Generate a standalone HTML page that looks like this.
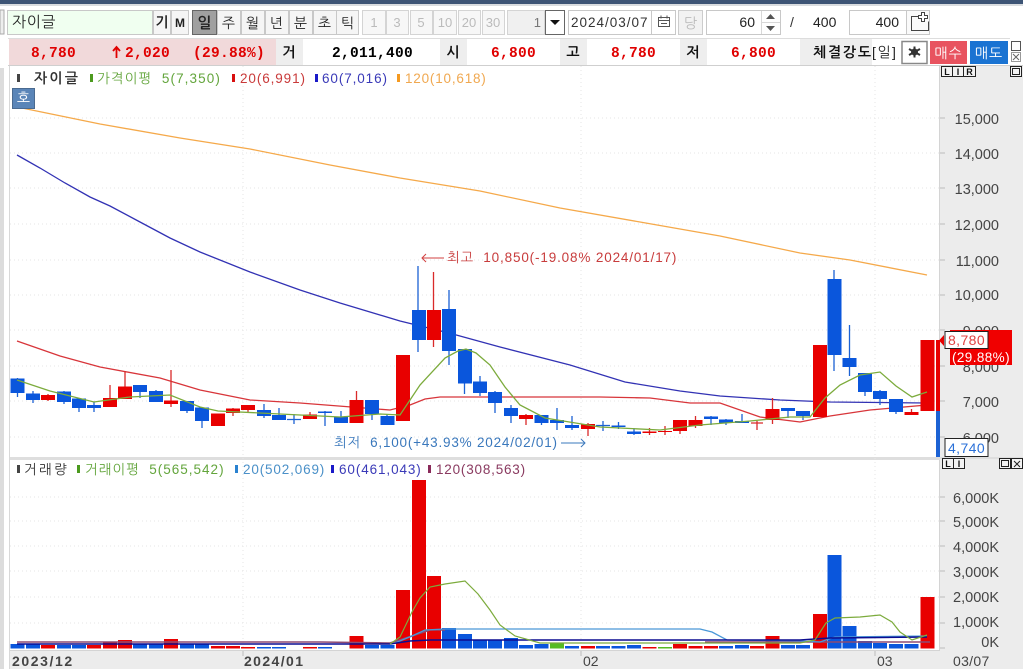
<!DOCTYPE html>
<html lang="ko"><head><meta charset="utf-8"><title>자이글</title>
<style>
html,body{margin:0;padding:0;background:#fff;width:1023px;height:669px;overflow:hidden}
svg{display:block;position:absolute;left:0;top:0;filter:blur(.35px)}
text{font-family:"Liberation Sans","NanumGothic","Noto Sans CJK KR",sans-serif;font-size:14px}
.b{font-weight:bold}
.ax{font-size:14.5px;fill:#444;text-anchor:end}
.tb{font-size:14px;fill:#222;text-anchor:middle}
.dis{font-size:13px;fill:#bbb;text-anchor:middle}
.r2{font-family:"Liberation Mono","NanumGothic",monospace;font-weight:bold;font-size:14.5px;letter-spacing:.3px}
.hd{font-weight:bold;font-size:14px;fill:#111;text-anchor:middle}
</style></head><body>
<svg width="1023" height="669" viewBox="0 0 1023 669" xmlns="http://www.w3.org/2000/svg">
<rect width="1023" height="669" fill="#fff"/>
<!-- top strip -->
<rect width="1023" height="4" fill="#3d5475"/><rect y="4" width="1023" height="2" fill="#d9dcdf"/>
<rect x="0" y="10" width="4" height="24" fill="#eee" stroke="#aaa"/>
<!-- toolbar -->
<rect x="7.500" y="10.500" width="145" height="24" fill="#f0fff0" stroke="#c8c8c8"/>
<text x="12" y="27" style="font-size:15px;letter-spacing:.6px" fill="#222">자이글</text>
<g fill="#f5f5f5" stroke="#c8c8c8">
<rect x="153.500" y="10.500" width="17" height="24"/><rect x="171.500" y="10.500" width="17" height="24"/>
<rect x="217.500" y="10.500" width="23" height="24"/><rect x="241.500" y="10.500" width="23" height="24"/><rect x="265.500" y="10.500" width="23" height="24"/><rect x="289.500" y="10.500" width="23" height="24"/><rect x="313.500" y="10.500" width="23" height="24"/><rect x="336.500" y="10.500" width="22" height="24"/>
</g>
<rect x="192.500" y="10.500" width="24" height="24" fill="#a0a0a0" stroke="#666"/>
<text class="tb b" x="162" y="27">기</text><text class="tb b" x="180" y="27" style="font-size:12px">M</text>
<text class="tb b" x="204.500" y="28" style="font-size:15px">일</text>
<text class="tb" x="228.500" y="28">주</text><text class="tb" x="252.500" y="28">월</text><text class="tb" x="276.500" y="28">년</text><text class="tb" x="300.500" y="28">분</text><text class="tb" x="324.500" y="28">초</text><text class="tb" x="347.500" y="28">틱</text>
<g fill="#f7f7f7" stroke="#d4d4d4">
<rect x="362.500" y="10.500" width="23" height="24"/><rect x="386.500" y="10.500" width="22" height="24"/><rect x="410.500" y="10.500" width="22" height="24"/><rect x="433.500" y="10.500" width="23" height="24"/><rect x="458.500" y="10.500" width="22" height="24"/><rect x="482.500" y="10.500" width="22" height="24"/>
</g>
<text class="dis" x="374" y="27">1</text><text class="dis" x="397" y="27">3</text><text class="dis" x="421" y="27">5</text><text class="dis" x="445" y="27">10</text><text class="dis" x="469" y="27">20</text><text class="dis" x="493" y="27">30</text>
<rect x="507.500" y="10.500" width="37" height="24" fill="#f0f0f0" stroke="#d4d4d4"/>
<text x="541" y="27" text-anchor="end" fill="#777" style="font-size:13px">1</text>
<rect x="545.500" y="10.500" width="19" height="24" fill="#fff" stroke="#666"/>
<path d="M550 20h10l-5 5z" fill="#111"/>
<rect x="568.500" y="10.500" width="107" height="24" fill="#fff" stroke="#c8c8c8"/><path d="M651.500 11v23" stroke="#c8c8c8"/>
<text x="571" y="27" fill="#333" style="font-size:13.500px;letter-spacing:1px">2024/03/07</text>
<path d="M658.500 17.500h11v9h-11zM658.500 20.500h11M661 15.500v3M667 15.500v3M661 23.500h6" fill="none" stroke="#555"/>
<rect x="678.500" y="10.500" width="24" height="24" fill="#f2f2f2" stroke="#ccc"/>
<text x="690.500" y="28" text-anchor="middle" fill="#bbb">당</text>
<rect x="706.500" y="10.500" width="74" height="24" fill="#fff" stroke="#c8c8c8"/><path d="M761.500 11v23M762 22.500h18" stroke="#d8d8d8"/>
<text x="755" y="27" text-anchor="end" fill="#222">60</text>
<path d="M766 19h9l-4.500-5zM766 26h9l-4.500 5z" fill="#555"/>
<text x="790" y="27" fill="#333">/</text><text x="813" y="27" fill="#222">400</text>
<rect x="849.500" y="10.500" width="57" height="24" fill="#fff" stroke="#c8c8c8"/>
<rect x="906.500" y="10.500" width="23" height="24" fill="#fafafa" stroke="#c8c8c8"/>
<text x="899" y="27" text-anchor="end" fill="#222">400</text>
<path d="M921 16.500h-9.500v14h17v-9" fill="none" stroke="#444"/><path d="M921.500 12.500h3v3h3v3h-3v3h-3v-3h-3v-3h3z" fill="#fff" stroke="#444"/>
<!-- row 2 -->
<rect x="8" y="38" width="1002" height="1" fill="#ddd"/>
<rect x="9" y="39" width="267" height="26" fill="#f1d9da"/>
<rect x="276" y="39" width="27" height="26" fill="#eeeeee"/><rect x="440" y="39" width="27" height="26" fill="#eeeeee"/><rect x="560" y="39" width="27" height="26" fill="#eeeeee"/><rect x="680" y="39" width="27" height="26" fill="#eeeeee"/><rect x="800" y="39" width="72" height="26" fill="#eeeeee"/>
<rect x="8" y="65" width="1015" height="1" fill="#cfcfcf"/>
<text class="r2" x="31" y="57" fill="#e00000">8,780</text>
<path d="M116.500 58v-10M113 51l3.500-4 3.500 4" fill="none" stroke="#e00000" stroke-width="1.800"/>
<text class="r2" x="125" y="57" fill="#e00000">2,020</text>
<text class="r2" x="193" y="57" fill="#e00000">(29.88%)</text>
<text class="hd" x="289" y="57">거</text>
<text class="r2" x="332" y="57" fill="#000">2,011,400</text>
<text class="hd" x="453" y="57">시</text>
<text class="r2" x="491" y="57" fill="#e00000">6,800</text>
<text class="hd" x="573" y="57">고</text>
<text class="r2" x="611" y="57" fill="#e00000">8,780</text>
<text class="hd" x="693" y="57">저</text>
<text class="r2" x="731" y="57" fill="#e00000">6,800</text>
<text x="813" y="57" class="b" fill="#111" style="font-size:14px;letter-spacing:1.800px">체결강도</text>
<rect x="872" y="39" width="29" height="26" fill="#fff"/>
<text x="872" y="57" fill="#222" style="font-size:14px;letter-spacing:1.500px">[일]</text>
<rect x="902" y="41.500" width="25" height="22" fill="#fff" stroke="#888" stroke-width="1.500"/>
<path d="M914.500 46.500v11M909 49l11 6M920 49l-11 6" stroke="#333" stroke-width="2" fill="none"/><circle cx="914.500" cy="52" r="3.500" fill="#333"/>
<rect x="930" y="41" width="37" height="23" fill="#e8535f"/><text x="948.500" y="58" text-anchor="middle" fill="#fff" style="letter-spacing:1px">매수</text>
<rect x="970" y="41" width="38" height="23" fill="#1a73d2"/><text x="989" y="58" text-anchor="middle" fill="#fff" style="letter-spacing:1px">매도</text>
<rect x="1011.500" y="41.500" width="9" height="9" fill="#fff" stroke="#555"/><rect x="1011.500" y="52.500" width="9" height="9" fill="#fff" stroke="#999"/><path d="M1013 54l6 6M1019 54l-6 6" stroke="#666"/>
<!-- left edge -->
<rect x="0" y="68" width="4" height="601" fill="#dcdcdc"/><rect x="9" y="66" width="1" height="603" fill="#d8d8d8"/>
<!-- axes background -->
<rect x="940" y="66" width="83" height="603" fill="#ececec"/><rect x="939" y="66" width="1" height="603" fill="#d4d4d4"/>
<rect x="10" y="651" width="930" height="18" fill="#ececec"/><rect x="10" y="650" width="930" height="1" fill="#d4d4d4"/>
<rect x="10" y="457" width="930" height="3" fill="#dedede"/>
<rect x="940" y="457" width="83" height="2" fill="#dedede"/>
<!-- grid -->
<g stroke="#e6e6e6" stroke-dasharray="1 3" fill="none">
<path d="M10 118H940M10 153H940M10 188H940M10 224H940M10 260H940M10 295H940M10 330H940M10 366H940M10 401H940M10 437H940"/>
<path d="M10 497H940M10 521H940M10 546H940M10 571H940M10 597H940M10 623H940"/>
<path d="M243 66V650M581 66V650M875 66V650"/>
</g>
<g stroke="#bbb" fill="none">
<path d="M940 118h5M940 153h5M940 188h5M940 224h5M940 260h5M940 295h5M940 330h5M940 366h5M940 401h5M940 437h5M940 497h5M940 521h5M940 546h5M940 571h5M940 597h5M940 623h5M940 648h5M243 651v5M581 651v5M875 651v5"/>
</g>
<!-- MA lines behind candles -->
<polyline fill="none" stroke="#f5a94a" stroke-width="1.300" points="22,108 100,124 180,138 250,149 330,165 400,178 480,191 560,208 640,222 720,236 800,253 850,260 927,275"/>
<polyline fill="none" stroke="#3232b4" stroke-width="1.300" points="17,155 40,168 65,183 90,197 110,206 140,222 170,238 200,252 250,272 300,290 340,303 400,321 449,333 500,347 570,365 625,382 680,391 720,396 780,400 830,402 927,403"/>
<polyline fill="none" stroke="#d8353a" stroke-width="1.300" points="17,341 60,356 100,367 160,378 200,390 250,400 300,403 390,410 410,405 425,399 440,397 520,397 600,397 650,398 690,403 720,403 760,417 800,422 830,416 870,410 927,405"/>
<!-- wicks -->
<path stroke="#d92a2a" stroke-width="1.300" fill="none" d="M48 394V401M110 385V407M125 371V399M171 370V407M233 408V416M248 405V412M310 412V419M356.500 391V423M433.500 272V347M526 414V425M588 423V436M649.500 428V435M665 426V435M680 420V434M695.500 416V428M757 421V430H757M751 423H763M772.500 398V424M911.500 409V415"/>
<path stroke="#1c62d4" stroke-width="1.300" fill="none" d="M17.500 378V397M33 391V403M64 391V404M79 398V412M94 402V412M140 385V398M156 390V402M187 401V413M202 407V428M264 404V418M279 408V420M294 414V424M287 419.500H301M325 411V426M341 411V423M372 400V420M387 414V425M418 266V352M449 290V365M464.500 349V394M480 376V396M495 391V413M511 405V423M541.500 415V425M557 408V430M572 416V430M603 421V431M596 425.500H610M618.500 422V429M634 428V435M711 416V425M726 419V425M742 414V423M788 408V418M803 411V420M834 270V371M849.500 325V376M865 373V396M880 390V405M896 399V414"/>
<!-- bodies -->
<g fill="#0a56dc">
<rect x="10.500" y="378.500" width="14" height="14.500"/><rect x="26" y="393.500" width="14" height="6.500"/><rect x="57" y="391.500" width="14" height="10.500"/><rect x="72" y="398.500" width="14" height="9.500"/><rect x="87" y="405" width="14" height="3"/><rect x="133" y="385" width="14" height="7"/><rect x="149" y="391" width="14" height="11"/><rect x="180" y="401" width="14" height="10"/><rect x="195" y="407.500" width="14" height="13.500"/><rect x="257" y="410" width="14" height="6"/><rect x="272" y="415" width="14" height="5"/><rect x="318" y="411.500" width="14" height="1.500"/><rect x="334" y="417" width="14" height="6"/><rect x="365" y="400" width="14" height="14"/><rect x="380.500" y="416" width="14" height="9"/><rect x="412" y="310" width="14" height="30"/><rect x="442" y="309" width="14" height="42"/><rect x="458" y="349" width="14" height="34.500"/><rect x="473" y="381.500" width="14" height="11.500"/><rect x="488" y="392" width="14" height="11"/><rect x="504" y="408" width="14" height="8"/><rect x="534.500" y="415" width="14" height="8"/><rect x="550" y="420" width="14" height="3"/><rect x="565" y="425" width="14" height="3"/><rect x="611.500" y="425.500" width="14" height="1.500"/><rect x="627" y="431.500" width="14" height="2.500"/><rect x="704" y="416.500" width="14" height="2.500"/><rect x="719" y="419.500" width="14" height="3.500"/><rect x="735" y="421" width="14" height="2"/><rect x="781" y="408" width="14" height="3"/><rect x="796" y="411" width="14" height="5"/><rect x="827.500" y="279" width="14" height="76"/><rect x="842.500" y="358" width="14" height="9"/><rect x="858" y="373" width="14" height="19"/><rect x="873" y="391" width="14" height="8"/><rect x="889" y="399" width="14" height="13"/>
</g>
<g fill="#e80000">
<rect x="41" y="395" width="14" height="5"/><rect x="103" y="398" width="14" height="9"/><rect x="118" y="386.500" width="14" height="12.500"/><rect x="164" y="400.500" width="14" height="3.500"/><rect x="211" y="413.500" width="14" height="12.500"/><rect x="226" y="408.500" width="14" height="4.500"/><rect x="241" y="405" width="14" height="5"/><rect x="303" y="414.500" width="14" height="4.500"/><rect x="349.500" y="400" width="14" height="23"/><rect x="396" y="355" width="14" height="66"/><rect x="427" y="310" width="14" height="30"/><rect x="519" y="415" width="14" height="4"/><rect x="581" y="424" width="14" height="5"/><rect x="642.500" y="431.500" width="14" height="1.500"/><rect x="658" y="431" width="14" height="1"/><rect x="673" y="420" width="14" height="11"/><rect x="688.500" y="420" width="14" height="6"/><rect x="765.500" y="409" width="14" height="11"/><rect x="904.500" y="412" width="14" height="3"/><rect x="813" y="345" width="14" height="72"/><rect x="920.500" y="340" width="14" height="71"/>
</g>
<rect x="936" y="340" width="4" height="71" fill="#e80000"/><rect x="936" y="411" width="4" height="46" fill="#1c62d4"/>
<!-- green MA on top -->
<polyline fill="none" stroke="#7cab3c" stroke-width="1.300" points="17,380 50,391 94,402 130,397 170,395 200,407 218,411 260,413 340,417 380,414 400,415 410,400 420,385 445,358 458,351 466,349 476,353 490,365 505,387 520,405 545,418 600,427 660,430 700,425 750,421 790,417 810,417 825,398 840,385 860,375 880,372 896,386 912,397 927,392"/>
<!-- legend -->
<rect x="17" y="74" width="3" height="8" fill="#444"/>
<text x="34" y="83" class="b" fill="#333" style="letter-spacing:2.200px">자이글</text>
<rect x="90" y="74" width="3" height="8" fill="#4c9a1e"/><text x="97" y="83" fill="#63a53c" style="font-size:13.500px;letter-spacing:1.100px">가격이평&#160; 5(7,350)</text>
<rect x="232" y="74" width="3" height="8" fill="#d80f0f"/><text x="240" y="83" fill="#c93a3a" style="font-size:13.500px;letter-spacing:.9px">20(6,991)</text>
<rect x="315" y="74" width="3" height="8" fill="#1a1ac8"/><text x="322" y="83" fill="#3a3ab8" style="font-size:13.500px;letter-spacing:.9px">60(7,016)</text>
<rect x="397" y="74" width="3" height="8" fill="#f59a20"/><text x="405" y="83" fill="#f0a850" style="font-size:13.500px;letter-spacing:.8px">120(10,618)</text>
<rect x="12.500" y="88.500" width="22" height="20" fill="#5a85b8" stroke="#4a6a90"/>
<text x="23.500" y="103" text-anchor="middle" fill="#fff">호</text>
<!-- annotations -->
<path d="M444 258H422M426 254l-4 4 4 4" fill="none" stroke="#d24040"/>
<text x="447" y="262" fill="#c83c3c" style="font-size:13.500px;letter-spacing:.85px">최고 &#160;10,850(-19.08% 2024/01/17)</text>
<text x="334" y="447" fill="#3a78bc" style="font-size:13.500px;letter-spacing:.8px">최저 &#160;6,100(+43.93% 2024/02/01)</text>
<path d="M561 443H585M581 439l4 4-4 4" fill="none" stroke="#3a78bc"/>
<!-- price axis -->
<text class="ax" x="999" y="124">15,000</text><text class="ax" x="999" y="159">14,000</text><text class="ax" x="999" y="194">13,000</text><text class="ax" x="999" y="230">12,000</text><text class="ax" x="999" y="266">11,000</text><text class="ax" x="999" y="300">10,000</text><text class="ax" x="999" y="336">9,000</text><text class="ax" x="999" y="372">8,000</text><text class="ax" x="999" y="407">7,000</text><text class="ax" x="999" y="443">6,000</text>
<rect x="950" y="330" width="62" height="35" fill="#f00000"/>
<path d="M944 335v11l-5-5.500z" fill="#e80000"/>
<rect x="945" y="331.500" width="43" height="17" fill="#fff" stroke="#222"/>
<text x="966.500" y="345" text-anchor="middle" fill="#e04040" style="font-size:14px;letter-spacing:.4px">8,780</text>
<text x="981" y="362" text-anchor="middle" fill="#fff" style="font-size:13.500px;letter-spacing:.4px">(29.88%)</text>
<rect x="945" y="438.500" width="43" height="18" fill="#fff" stroke="#222"/>
<text x="966.500" y="453" text-anchor="middle" fill="#2a70d8" style="font-size:14px;letter-spacing:.4px">4,740</text>
<!-- small boxes -->
<g fill="#f3f3f3" stroke="#222">
<rect x="941.500" y="66.500" width="11" height="10"/><rect x="952.500" y="66.500" width="11" height="10"/><rect x="963.500" y="66.500" width="12" height="10"/><rect x="1010.500" y="66.500" width="11" height="10"/>
<rect x="942.500" y="458.500" width="11" height="10"/><rect x="953.500" y="458.500" width="11" height="10"/><rect x="999.500" y="458.500" width="11" height="10"/><rect x="1011.500" y="458.500" width="11" height="10"/>
</g>
<g fill="#111" text-anchor="middle" font-weight="bold">
<text x="947" y="75" style="font-size:9px">L</text><text x="958" y="75" style="font-size:9px">I</text><text x="969.500" y="75" style="font-size:9px">R</text>
<text x="948" y="467" style="font-size:9px">L</text><text x="959" y="467" style="font-size:9px">I</text>
</g>
<rect x="1012.500" y="68.500" width="7" height="6" fill="none" stroke="#222"/><rect x="1001.500" y="460.500" width="7" height="6" fill="none" stroke="#222"/>
<path d="M1014 461l6 6M1020 461l-6 6" stroke="#222"/>
<!-- volume legend -->
<rect x="17" y="465" width="3" height="8" fill="#444"/><text x="24" y="474" fill="#333" style="font-size:13.500px;letter-spacing:2.300px">거래량</text>
<rect x="77" y="465" width="3" height="8" fill="#4c9a1e"/><text x="85" y="474" fill="#63a53c" style="font-size:13.500px;letter-spacing:1px">거래이평&#160; 5(565,542)</text>
<rect x="235" y="465" width="3" height="8" fill="#2a82d0"/><text x="243" y="474" fill="#4a90c8" style="font-size:13.500px;letter-spacing:.85px">20(502,069)</text>
<rect x="331" y="465" width="3" height="8" fill="#1a1ac8"/><text x="339" y="474" fill="#3a3ab8" style="font-size:13.500px;letter-spacing:.9px">60(461,043)</text>
<rect x="428" y="465" width="3" height="8" fill="#8a2a5a"/><text x="436" y="474" fill="#8a3a60" style="font-size:13.500px;letter-spacing:.8px">120(308,563)</text>
<!-- volume axis -->
<text class="ax" x="999" y="503">6,000K</text><text class="ax" x="999" y="527">5,000K</text><text class="ax" x="999" y="552">4,000K</text><text class="ax" x="999" y="577">3,000K</text><text class="ax" x="999" y="602">2,000K</text><text class="ax" x="999" y="627">1,000K</text><text class="ax" x="999" y="647">0K</text>
<!-- volume bars -->
<g fill="#0a56dc">
<rect x="10.500" y="644" width="14" height="4.500"/><rect x="26" y="644" width="14" height="4.500"/><rect x="57" y="645" width="14" height="3.500"/><rect x="72" y="645" width="14" height="3.500"/><rect x="133" y="644" width="14" height="4.500"/><rect x="149" y="644" width="14" height="4.500"/><rect x="180" y="644" width="14" height="4.500"/><rect x="195" y="644" width="14" height="4.500"/><rect x="257" y="647" width="14" height="1.500"/><rect x="272" y="647" width="14" height="1.500"/><rect x="318" y="647" width="14" height="1.500"/><rect x="365" y="645" width="14" height="3.500"/><rect x="380.500" y="645" width="14" height="3.500"/><rect x="442" y="628" width="14" height="20.500"/><rect x="458" y="634" width="14" height="14.500"/><rect x="473" y="640" width="14" height="8.500"/><rect x="488" y="640" width="14" height="8.500"/><rect x="504" y="638" width="14" height="10.500"/><rect x="519" y="645" width="14" height="3.500"/><rect x="534.500" y="644" width="14" height="4.500"/><rect x="565" y="646" width="14" height="2.500"/><rect x="596" y="646" width="14" height="2.500"/><rect x="611.500" y="646" width="14" height="2.500"/><rect x="627" y="645" width="14" height="3.500"/><rect x="719" y="646" width="14" height="2.500"/><rect x="735" y="645" width="14" height="3.500"/><rect x="781" y="645" width="14" height="3.500"/><rect x="796" y="645" width="14" height="3.500"/><rect x="827.500" y="555" width="14" height="93.500"/><rect x="842.500" y="626" width="14" height="22.500"/><rect x="858" y="641" width="14" height="7.500"/><rect x="873" y="643" width="14" height="5.500"/><rect x="889" y="644" width="14" height="4.500"/><rect x="904.500" y="644" width="14" height="4.500"/>
</g>
<g fill="#e80000">
<rect x="41" y="645" width="14" height="3.500"/><rect x="87" y="645" width="14" height="3.500"/><rect x="103" y="642" width="14" height="6.500"/><rect x="118" y="640" width="14" height="8.500"/><rect x="164" y="639" width="14" height="9.500"/><rect x="211" y="646" width="14" height="2.500"/><rect x="226" y="646" width="14" height="2.500"/><rect x="241" y="647" width="14" height="1.500"/><rect x="303" y="647" width="14" height="1.500"/><rect x="349.500" y="636" width="14" height="12.500"/><rect x="396" y="590" width="14" height="58.500"/><rect x="412" y="480" width="14" height="168.500"/><rect x="427" y="576" width="14" height="72.500"/><rect x="581" y="646" width="14" height="2.500"/><rect x="642.500" y="647" width="14" height="1.500"/><rect x="673" y="644" width="14" height="4.500"/><rect x="688.500" y="646" width="14" height="2.500"/><rect x="704" y="646" width="14" height="2.500"/><rect x="750" y="646" width="14" height="2.500"/><rect x="765.500" y="636" width="14" height="12.500"/><rect x="813" y="614" width="14" height="34.500"/><rect x="920.500" y="597" width="14" height="51.500"/>
</g>
<g fill="#55bb22">
<rect x="550" y="643" width="14" height="5.500"/><rect x="658" y="647" width="14" height="1.500"/>
</g>
<!-- volume lines -->
<polyline fill="none" stroke="#8d4a72" stroke-width="1.500" points="17,642 320,642 390,643 412,636 430,630 445,630"/>
<polyline fill="none" stroke="#8d4a72" stroke-width="1.500" points="705,642 800,642 930,642"/>
<polyline fill="none" stroke="#4a98d8" stroke-width="1.300" points="395,643 412,636 425,630 445,629 700,629 712,632 727,640 800,641 820,642 835,637 927,636"/>
<polyline fill="none" stroke="#0c0c90" stroke-width="1.500" points="17,644 390,644 410,641 430,640 800,640 830,638 927,637"/>
<polyline fill="none" stroke="#7cab3c" stroke-width="1.200" points="390,644 400,637 412,612 420,598 430,587 445,584 465,581 478,594 490,610 500,625 515,636 540,643 800,643 815,640 826,623 835,618 860,617 880,615 892,622 900,632 912,640 927,635"/>
<!-- bottom axis -->
<text x="12" y="666" class="b" fill="#444" style="font-size:14px;letter-spacing:1.600px">2023/12</text>
<text x="244" y="666" class="b" fill="#444" style="font-size:14px;letter-spacing:1.400px">2024/01</text>
<text x="583" y="666" fill="#444" style="font-size:14px">02</text>
<text x="877" y="666" fill="#444" style="font-size:14px">03</text>
<text x="953" y="666" fill="#444" style="font-size:14px;letter-spacing:.3px">03/07</text>
</svg>
</body></html>
